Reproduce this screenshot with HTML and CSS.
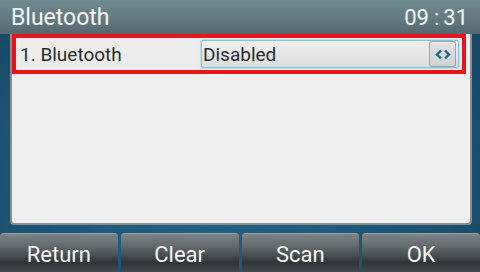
FILE: index.html
```html
<!DOCTYPE html>
<html>
<head>
<meta charset="utf-8">
<link rel="stylesheet" href="styles.css">
</head>
<body>
<div class="screen">
  <div class="titlebar">
    <span class="title">Bluetooth</span>
    <span class="time">09<span class="colon">:</span>31</span>
  </div>
  <div class="panel">
    <div class="row selected">
      <span class="label">1. Bluetooth</span>
      <div class="select">
        <span class="value">Disabled</span>
        <span class="switch">
          <svg width="16" height="11" viewBox="0 0 16 11"><path d="M6 1.5 L2 5.5 L6 9.5 M10 1.5 L14 5.5 L10 9.5" fill="none" stroke="#1d6a96" stroke-width="2.4"/></svg>
        </span>
      </div>
    </div>
  </div>
  <div class="softkeys">
    <div class="key">Return</div>
    <div class="key">Clear</div>
    <div class="key">Scan</div>
    <div class="key">OK</div>
  </div>
</div>
</body>
</html>
```
FILE: styles.css
```css
html, body {
  margin: 0;
  padding: 0;
}
body {
  width: 480px;
  height: 272px;
  overflow: hidden;
  font-family: Roboto, "Liberation Sans", sans-serif;
  background: radial-gradient(ellipse at 45% 65%, #22668a 0%, #1b5475 55%, #18445f 100%);
}
.screen {
  width: 480px;
  height: 272px;
  display: flex;
  flex-direction: column;
}
.titlebar {
  height: 34px;
  flex: none;
  display: flex;
  align-items: center;
  justify-content: space-between;
  padding: 0 12px 0 11px;
  color: #f4f6f6;
  font-size: 23px;
  background: linear-gradient(to bottom, #6f8a91 0%, #627a80 55%, #54696f 100%);
}
.title {
  padding-top: 1px;
}
.time {
  padding-top: 1px;
  font-size: 22px;
}
.colon {
  margin: 0 4px 0 5px;
}
.panel {
  margin: 0 8px 0 10px;
  height: 189px;
  flex: none;
  background: #efefef;
  border: 2px solid #8c8c8c;
  border-top: none;
  border-radius: 0 0 4px 4px;
}
.row {
  height: 32px;
  display: flex;
  align-items: center;
  padding-left: 4px;
  margin-right: 4px;
  background: #ececec;
  color: #2b2b2b;
  font-size: 19px;
}
.row.selected {
  border: 4px solid #e8141c;
}
.label {
  width: 181px;
  flex: none;
}
.select {
  width: 256px;
  height: 26px;
  flex: none;
  display: flex;
  align-items: center;
  justify-content: space-between;
  border: 1px solid #7fc9da;
  box-shadow: 0 0 1px 1px #b4e2ec;
  border-radius: 2px;
  background: linear-gradient(to bottom, #f0f0f0 0%, #e6e6e6 50%, #dcdcdc 100%);
}
.value {
  padding-left: 1px;
}
.switch {
  width: 25px;
  height: 24px;
  margin-right: 2px;
  display: flex;
  align-items: center;
  justify-content: center;
  border: 1px solid #a2a2a2;
  border-radius: 3px;
  box-shadow: inset 0 1px 0 #eeeeee;
  background: linear-gradient(to bottom, #e2e2e2 0%, #d2d2d2 100%);
}
.softkeys {
  margin-top: auto;
  height: 39px;
  display: flex;
  gap: 3px;
}
.key {
  flex: 1;
  display: flex;
  align-items: center;
  justify-content: center;
  color: #f4f4f4;
  font-size: 22px;
  padding-top: 2px;
  border-radius: 4px 4px 0 0;
  border-top: 1px solid #9aa2a5;
  background: linear-gradient(to bottom, #7c8488 0%, #656c70 30%, #4a5054 55%, #2f3437 75%, #454b4e 100%);
}
```
